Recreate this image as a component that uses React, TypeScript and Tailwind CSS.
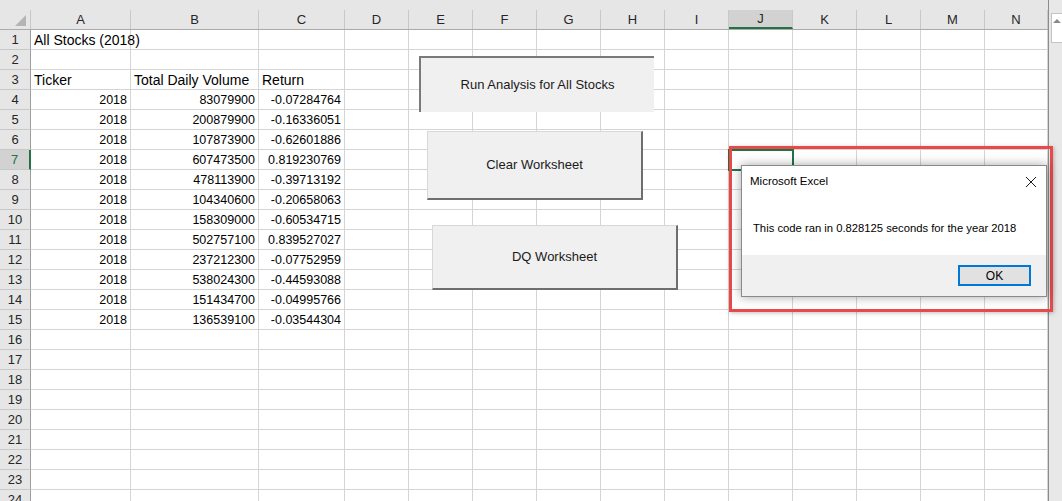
import React from "react";

const columns = [
  { id: "A", w: "w-[100px]" },
  { id: "B", w: "w-[128px]" },
  { id: "C", w: "w-[86px]" },
  { id: "D", w: "w-[64px]" },
  { id: "E", w: "w-[64px]" },
  { id: "F", w: "w-[64px]" },
  { id: "G", w: "w-[64px]" },
  { id: "H", w: "w-[64px]" },
  { id: "I", w: "w-[64px]" },
  { id: "J", w: "w-[64px]" },
  { id: "K", w: "w-[64px]" },
  { id: "L", w: "w-[64px]" },
  { id: "M", w: "w-[64px]" },
  { id: "N", w: "w-[63px]" },
];

const stocks: [string, string][] = [
  ["83079900", "-0.07284764"],
  ["200879900", "-0.16336051"],
  ["107873900", "-0.62601886"],
  ["607473500", "0.819230769"],
  ["478113900", "-0.39713192"],
  ["104340600", "-0.20658063"],
  ["158309000", "-0.60534715"],
  ["502757100", "0.839527027"],
  ["237212300", "-0.07752959"],
  ["538024300", "-0.44593088"],
  ["151434700", "-0.04995766"],
  ["136539100", "-0.03544304"],
];

type Cell = { text: string; num?: boolean };

function rowCells(row: number): Record<string, Cell> {
  if (row === 1) return { A: { text: "All Stocks (2018)" } };
  if (row === 3) return { A: { text: "Ticker" }, B: { text: "Total Daily Volume" }, C: { text: "Return" } };
  if (row >= 4 && row <= 15) {
    const [vol, ret] = stocks[row - 4];
    return { A: { text: "2018", num: true }, B: { text: vol, num: true }, C: { text: ret, num: true } };
  }
  return {};
}

const font = { fontFamily: '"Liberation Sans", Arial, sans-serif' };

function SheetButton({ label, className }: { label: string; className: string }) {
  return (
    <div className={`absolute flex items-center justify-center bg-[#f0f0f0] text-[13px] text-[#1a1a1a] ${className}`}>
      {label}
    </div>
  );
}

export default function App() {
  const rows = Array.from({ length: 24 }, (_, i) => i + 1);

  return (
    <div className="relative w-[1062px] h-[501px] overflow-hidden bg-[#e6e6e6]" style={font}>
      <div className="flex">
        {/* Sheet */}
        <div className="w-[1048px] flex flex-col">
          <div className="h-[10px]" />
          {/* Column headers */}
          <div className="flex h-[20px] border-b border-[#ababab]">
            <div className="relative w-[31px] border-r border-[#c8c8c8]">
              <div className="absolute right-[4px] bottom-[3px] w-0 h-0 border-l-[11px] border-l-transparent border-b-[11px] border-b-[#b4b4b4]" />
            </div>
            {columns.map((c) =>
              c.id === "J" ? (
                <div key={c.id} className={`${c.w} flex items-center justify-center bg-[#d2d2d2] border-r border-[#c8c8c8] border-b-2 border-b-[#217346] text-[13px] text-[#262626]`}>
                  {c.id}
                </div>
              ) : (
                <div key={c.id} className={`${c.w} flex items-center justify-center border-r border-[#c8c8c8] text-[13px] text-[#262626]`}>
                  {c.id}
                </div>
              )
            )}
          </div>
          {/* Rows */}
          {rows.map((r) => {
            const cells = rowCells(r);
            return (
              <div key={r} className="flex h-[20px]">
                {r === 7 ? (
                  <div className="w-[31px] flex items-center justify-center pt-[1px] bg-[#d2d2d2] border-b border-[#c8c8c8] border-r-2 border-r-[#217346] text-[13px] text-[#217346]">
                    {r}
                  </div>
                ) : (
                  <div className="w-[31px] flex items-center justify-center pt-[1px] border-b border-[#c8c8c8] border-r border-r-[#9e9e9e] text-[13px] text-[#262626]">
                    {r}
                  </div>
                )}
                {columns.map((c) => {
                  const cell = cells[c.id];
                  return (
                    <div
                      key={c.id}
                      className={`${c.w} bg-white border-r border-b border-[#d4d4d4] px-[3px] pt-[1px] whitespace-nowrap leading-[19px] text-black ${
                        cell?.num ? "text-right text-[12.5px]" : "text-left text-[14px]"
                      }`}
                    >
                      <span className="relative z-10">{cell?.text ?? ""}</span>
                    </div>
                  );
                })}
              </div>
            );
          })}
        </div>
        {/* Scrollbar */}
        <div className="w-[14px] h-[501px] border-l border-[#8c8c8c] bg-[#e8e8e8] pl-[2px] pt-[13px]">
          <div className="h-[30px] bg-white border border-[#c4c4c4] border-r-0 flex justify-center pt-[5px]">
            <div className="w-0 h-0 border-l-[4px] border-l-transparent border-r-[4px] border-r-transparent border-b-[4px] border-b-[#8a8a8a]" />
          </div>
        </div>
      </div>

      {/* Form buttons */}
      <SheetButton label="Run Analysis for All Stocks" className="left-[419px] top-[56px] w-[235px] h-[56px] border-t-2 border-l-2 border-[#7a7a7a]" />
      <SheetButton label="Clear Worksheet" className="left-[427px] top-[131px] w-[216px] h-[69px] border-t border-l border-[#d8d8d8] border-r-2 border-b-2 border-r-[#6e6e6e] border-b-[#6e6e6e]" />
      <SheetButton label="DQ Worksheet" className="left-[432px] top-[225px] w-[246px] h-[65px] border-t border-l border-[#d8d8d8] border-r-2 border-b-2 border-r-[#6e6e6e] border-b-[#6e6e6e]" />

      {/* Selected cell J7 */}
      <div className="absolute left-[728px] top-[149px] w-[66px] h-[22px] border-2 border-[#217346]" />

      {/* Highlight box */}
      <div className="absolute left-[729px] top-[146px] w-[324px] h-[166px] border-[3px] border-[#e84a4a] shadow-[1px_1px_4px_rgba(0,0,0,0.25)]" />

      {/* Message box */}
      <div
        className="absolute left-[741px] top-[165px] w-[306px] h-[132px] flex flex-col bg-white border border-[#8a8a8a] shadow-[0_0_10px_rgba(0,0,0,0.35)]"
        style={{ fontFamily: '"Liberation Sans", "Segoe UI", Arial, sans-serif' }}
      >
        <div className="h-[31px] flex items-center justify-between pl-[8px] pr-[8px]">
          <span className="text-[11.5px] text-black">Microsoft Excel</span>
          <svg width="12" height="12" viewBox="0 0 12 12" className="mr-[1px]">
            <path d="M1 1 L11 11 M11 1 L1 11" stroke="#1a1a1a" strokeWidth="1" fill="none" />
          </svg>
        </div>
        <div className="h-[58px] pl-[11px] pt-[23px] text-[11.25px] text-black whitespace-nowrap">
          This code ran in 0.828125 seconds for the year 2018
        </div>
        <div className="flex-1 bg-[#f0f0f0] flex justify-end pr-[15px] pt-[10px]">
          <div className="w-[73px] h-[21px] flex items-center justify-center bg-[#e1e1e1] border-2 border-[#0078d7] text-[12px] text-black">
            OK
          </div>
        </div>
      </div>
    </div>
  );
}
